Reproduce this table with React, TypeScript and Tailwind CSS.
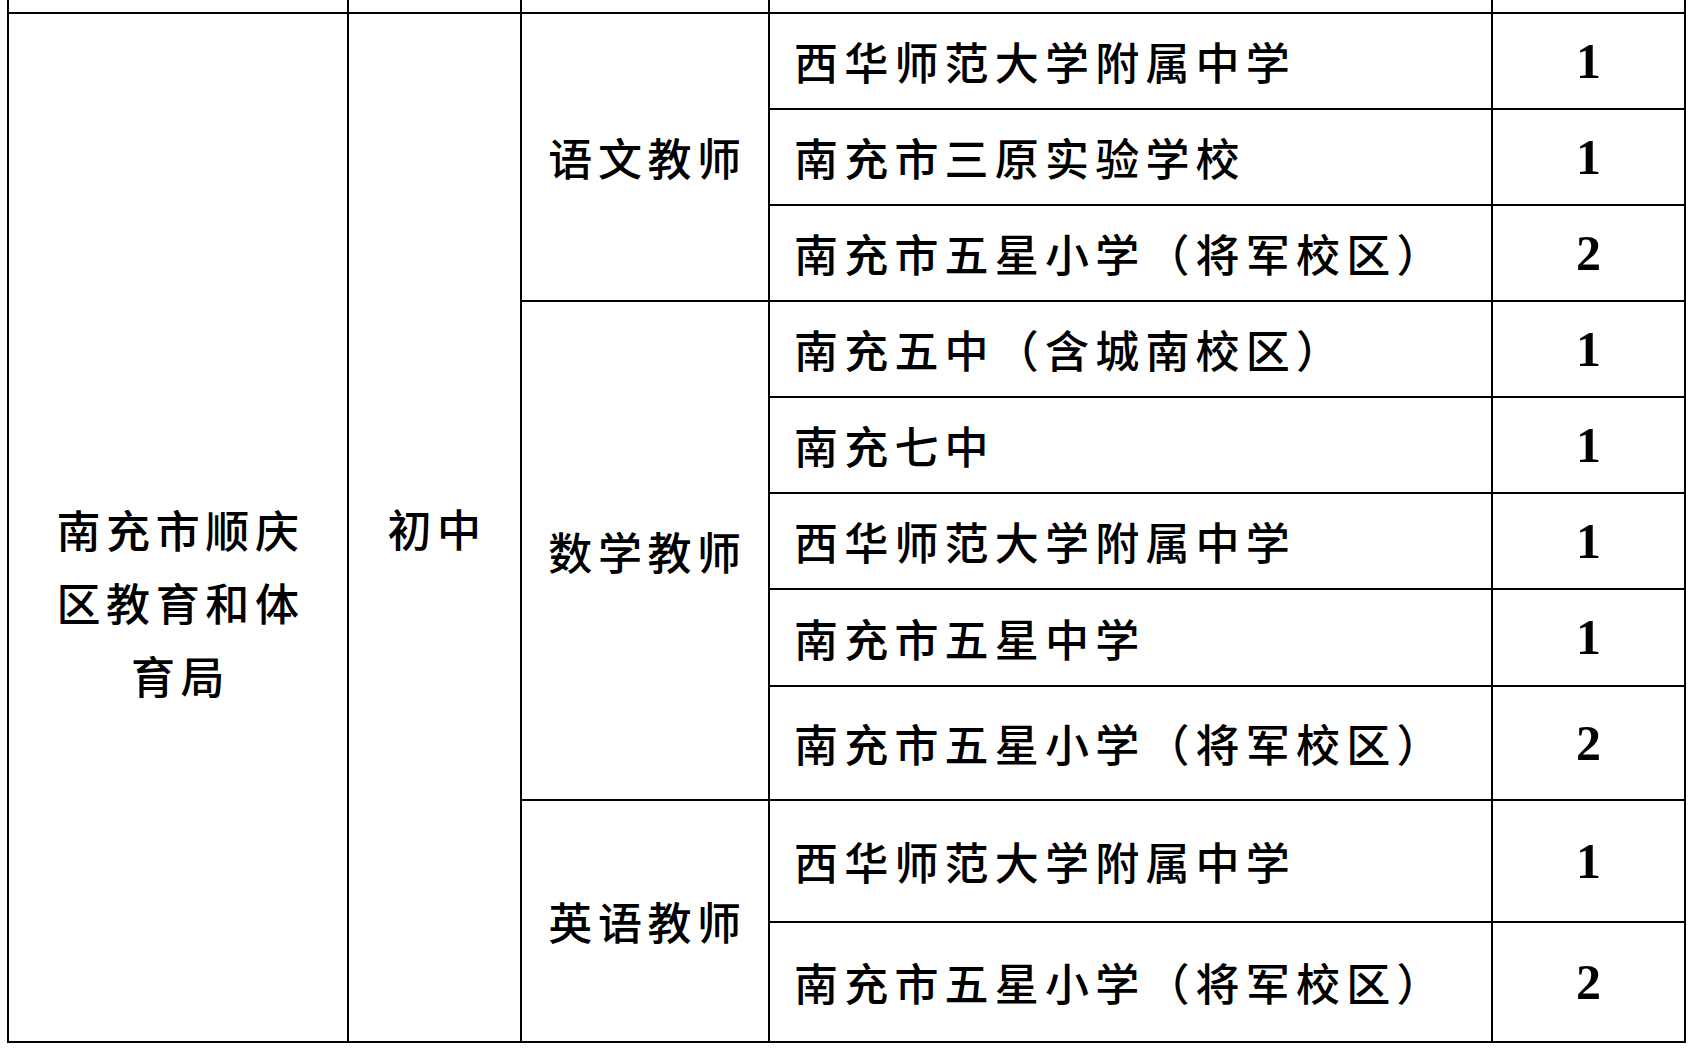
import React from "react";

const cjk = { fontFamily: '"Noto Sans CJK SC", "Noto Sans", sans-serif' };
const num = { fontFamily: '"Liberation Serif", "Times New Roman", serif' };

type Row = { school: string; n: string; row: string };

const rows: Row[] = [
  { school: "西华师范大学附属中学", n: "1", row: "row-start-2" },
  { school: "南充市三原实验学校", n: "1", row: "row-start-3" },
  { school: "南充市五星小学（将军校区）", n: "2", row: "row-start-4" },
  { school: "南充五中（含城南校区）", n: "1", row: "row-start-5" },
  { school: "南充七中", n: "1", row: "row-start-6" },
  { school: "西华师范大学附属中学", n: "1", row: "row-start-7" },
  { school: "南充市五星中学", n: "1", row: "row-start-8" },
  { school: "南充市五星小学（将军校区）", n: "2", row: "row-start-9" },
  { school: "西华师范大学附属中学", n: "1", row: "row-start-10" },
  { school: "南充市五星小学（将军校区）", n: "2", row: "row-start-11" },
];

export default function App() {
  return (
    <div className="w-[1692px] h-[1050px] bg-white overflow-hidden">
      <div
        className="ml-[7px] w-[1679px] grid bg-black gap-[2px] px-[2px] pb-[2px] grid-cols-[338px_171px_246px_721px_191px] grid-rows-[12px_94px_94px_94px_94px_94px_94px_95px_112px_120px_118px] text-black font-medium"
        style={cjk}
      >
        <div className="bg-white col-start-1 row-start-1" />
        <div className="bg-white col-start-2 row-start-1" />
        <div className="bg-white col-start-3 row-start-1" />
        <div className="bg-white col-start-4 row-start-1" />
        <div className="bg-white col-start-5 row-start-1" />

        <div className="bg-white col-start-1 row-start-2 row-span-10 flex flex-col items-center justify-center pt-[149px] text-[44px] leading-[73px] tracking-[5.6px] pl-[5px]">
          <div>南充市顺庆</div>
          <div>区教育和体</div>
          <div>育局</div>
        </div>

        <div className="bg-white col-start-2 row-start-2 row-span-10 flex items-center justify-center text-[44px] tracking-[5.6px] pl-[5px]">
          初中
        </div>

        <div className="bg-white col-start-3 row-start-2 row-span-3 flex items-center justify-center text-[44px] tracking-[5.6px] pl-[5px]">
          语文教师
        </div>
        <div className="bg-white col-start-3 row-start-5 row-span-5 flex items-center justify-center text-[44px] tracking-[5.6px] pl-[5px]">
          数学教师
        </div>
        <div className="bg-white col-start-3 row-start-10 row-span-2 flex items-center justify-center text-[44px] tracking-[5.6px] pl-[5px]">
          英语教师
        </div>

        {rows.map((r, i) => (
          <React.Fragment key={i}>
            <div className={`bg-white col-start-4 ${r.row} flex items-center pl-[24px] text-[44px] tracking-[6.2px] whitespace-nowrap`}>
              {r.school}
            </div>
            <div
              className={`bg-white col-start-5 ${r.row} flex items-center justify-center text-[50px] font-bold`}
              style={num}
            >
              {r.n}
            </div>
          </React.Fragment>
        ))}
      </div>
    </div>
  );
}
